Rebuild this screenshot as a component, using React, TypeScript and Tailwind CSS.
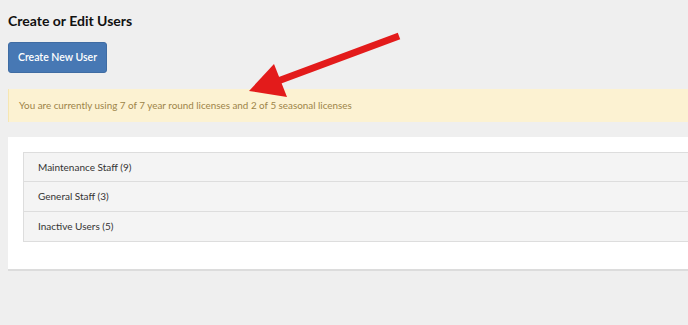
import React from "react";

const groups = ["Maintenance Staff (9)", "General Staff (3)", "Inactive Users (5)"];

export default function App() {
  return (
    <div
      className="relative w-[688px] h-[325px] overflow-hidden bg-[#efefef] pl-2"
      style={{ fontFamily: 'Lato, "Open Sans", sans-serif' }}
    >
      <h1 className="pt-[11px] text-[14px] leading-[20px] font-bold text-[#111]">Create or Edit Users</h1>
      <button className="mt-[11px] w-[99px] h-[31px] rounded-[3px] bg-[#4778b4] border border-[#3f6ca3] text-white text-[10.5px] font-semibold leading-none">
        Create New User
      </button>
      <div className="mt-[16px] h-[33px] bg-[#fcf2d2] border-l border-[#f6e6b3] flex items-center pl-[10px] text-[9.85px] text-[#9c8448]">
        You are currently using 7 of 7 year round licenses and 2 of 5 seasonal licenses
      </div>
      <div className="mt-[15px] bg-white border-b-2 border-[#dcdcdc] pt-[15px] pl-[15px] pb-[27px]">
        {groups.map((g, i) => (
          <div
            key={g}
            className={`h-[30px] bg-[#f4f4f4] border border-r-0 border-[#dddddd] flex items-center pl-[14px] text-[10px] text-[#333] ${i > 0 ? "border-t-0" : ""}`}
          >
            {g}
          </div>
        ))}
      </div>
      <svg className="absolute left-0 top-0 pointer-events-none" width="688" height="325">
        <line x1="278" y1="81" x2="399" y2="36" stroke="#e31b1b" strokeWidth="7" />
        <polygon points="249,91 274,64 287,97" fill="#e31b1b" />
      </svg>
    </div>
  );
}
